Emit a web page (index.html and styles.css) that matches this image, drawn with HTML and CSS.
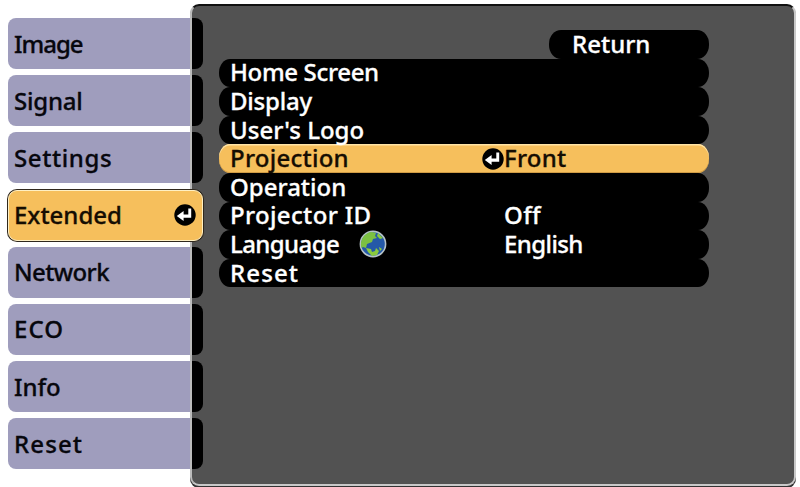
FILE: index.html
```
<!DOCTYPE html>
<html lang="en">
<head>
<meta charset="UTF-8">
<title>Projector menu</title>
<link rel="stylesheet" href="styles.css">
</head>
<body>

<svg class="defs" width="0" height="0">
  <symbol id="enter" viewBox="0 0 22 22">
    <circle cx="11" cy="11" r="10.7" fill="#000"/>
    <path d="M14.3 4.6h2.9v9.1H9.6v3.4L2.8 12l6.8-5.1v3.6h4.7z" fill="#fff"/>
  </symbol>
</svg>

<div class="screen">
  <nav class="tabs">
    <div class="tab image"><span>Image</span></div>
    <div class="tab signal"><span>Signal</span></div>
    <div class="tab settings"><span>Settings</span></div>
    <div class="tab extended active"><span>Extended</span><svg class="enter"><use href="#enter"/></svg></div>
    <div class="tab network"><span>Network</span></div>
    <div class="tab eco"><span>ECO</span></div>
    <div class="tab info"><span>Info</span></div>
    <div class="tab reset"><span>Reset</span></div>
  </nav>

  <main class="panel">
    <div class="return">Return</div>
    <div class="menu">
      <div class="row home"><span>Home Screen</span></div>
      <div class="row display"><span>Display</span></div>
      <div class="row logo"><span>User's Logo</span></div>
      <div class="row projection active"><span>Projection</span><svg class="enter"><use href="#enter"/></svg><span class="value">Front</span></div>
      <div class="row operation"><span>Operation</span></div>
      <div class="row projector-id"><span>Projector ID</span><span class="value">Off</span></div>
      <div class="row language">
        <span>Language</span>
        <svg class="globe" viewBox="0 0 28 28">
          <circle cx="14" cy="14" r="12.6" fill="#2459a8" stroke="#b5c2c8" stroke-width="1.6"/>
          <path d="M2.5 18C0 10 6 2 13 2l4 1-1 3 2 2-4 1-1 3-5 2-1 4-3-1z" fill="#7cc142"/>
          <path d="M19 3l5 5-3 1-3-3zM7 18l5 1 1 3 3-1 1-3 3 3-2 4-5 1-4-4zM20 17l3 2-2 2z" fill="#8acb3e"/>
        </svg>
        <span class="value">English</span>
      </div>
      <div class="row reset"><span>Reset</span></div>
    </div>
  </main>
</div>

</body>
</html>
```
FILE: styles.css
```
body {
  margin:0; background:#fff; overflow:hidden;
  font-family:"Noto Sans", sans-serif; font-size:24px; font-weight:500; line-height:26px;
  -webkit-text-stroke:0.3px;
}
.defs { display:block; }
.screen { display:flex; height:487px; }

.tabs { width:196px; padding:18px 0 0 8px; display:flex; flex-direction:column; gap:6.2px; z-index:1; }
.tab {
  box-sizing:border-box; height:51px; width:195px; padding-left:6px;
  display:flex; align-items:center; color:#07070d;
}
.tab:not(.active) {
  background:linear-gradient(#9f9dbd, #9f9dbd) 0 0 / 182px 100% no-repeat,
    linear-gradient(#000, #000) 184px 0 / 11px 100% no-repeat;
  border-radius:8px;
}
.tab.active {
  background:#f6bf5c; border:1px solid #fff0c4; border-radius:9px; padding:0 6px 0 5px;
  justify-content:space-between; color:#150d02; box-shadow:0 0 0 1px #30281d;
}
.enter { width:22px; height:22px; flex:none; }

.panel {
  box-sizing:border-box; width:606px; height:482px; margin:4px 0 0 -14px;
  background:#525252; border:2px solid #c9c9c9; border-top-color:#111; border-left-color:#bbb;
  border-radius:9px; padding:24px 0 0 27px; box-shadow:0 2px 0 #333;
}
.return {
  box-sizing:border-box; width:160px; height:28.6px; margin-left:330px; padding-left:23px;
  background:#000; color:#fff; border-radius:12px / 14px; line-height:27px;
}
.menu { width:490px; }
.row {
  height:28.6px; display:flex; align-items:center;
  background:#000; color:#fff; border-radius:11px / 14px; position:relative;
}
.row.active { background:#f6bf5c; color:#150d02; box-shadow:inset 0 1.5px 0 #ffe4a5, inset 0 -1px 0 #cf9b45; }
/* keeps descenders above the next row */
.row span { margin:-0.5px 0 0.5px 11px; z-index:1; }
.row .value { position:absolute; left:274px; }
.row .enter { position:absolute; left:263px; top:4px; }
.globe { width:28px; height:28px; margin-left:20px; }

/* letter fitting */
.image { letter-spacing:-1px; }
.signal { letter-spacing:-0.2px; }
.settings { letter-spacing:0.6px; }
.network { letter-spacing:-0.6px; }
.eco, .reset { letter-spacing:1.1px; }
.home { letter-spacing:-0.35px; }
.display { letter-spacing:-0.2px; }
.projection { letter-spacing:0.25px; }
.projector-id { letter-spacing:0.35px; }
.language { letter-spacing:-0.6px; }
```
